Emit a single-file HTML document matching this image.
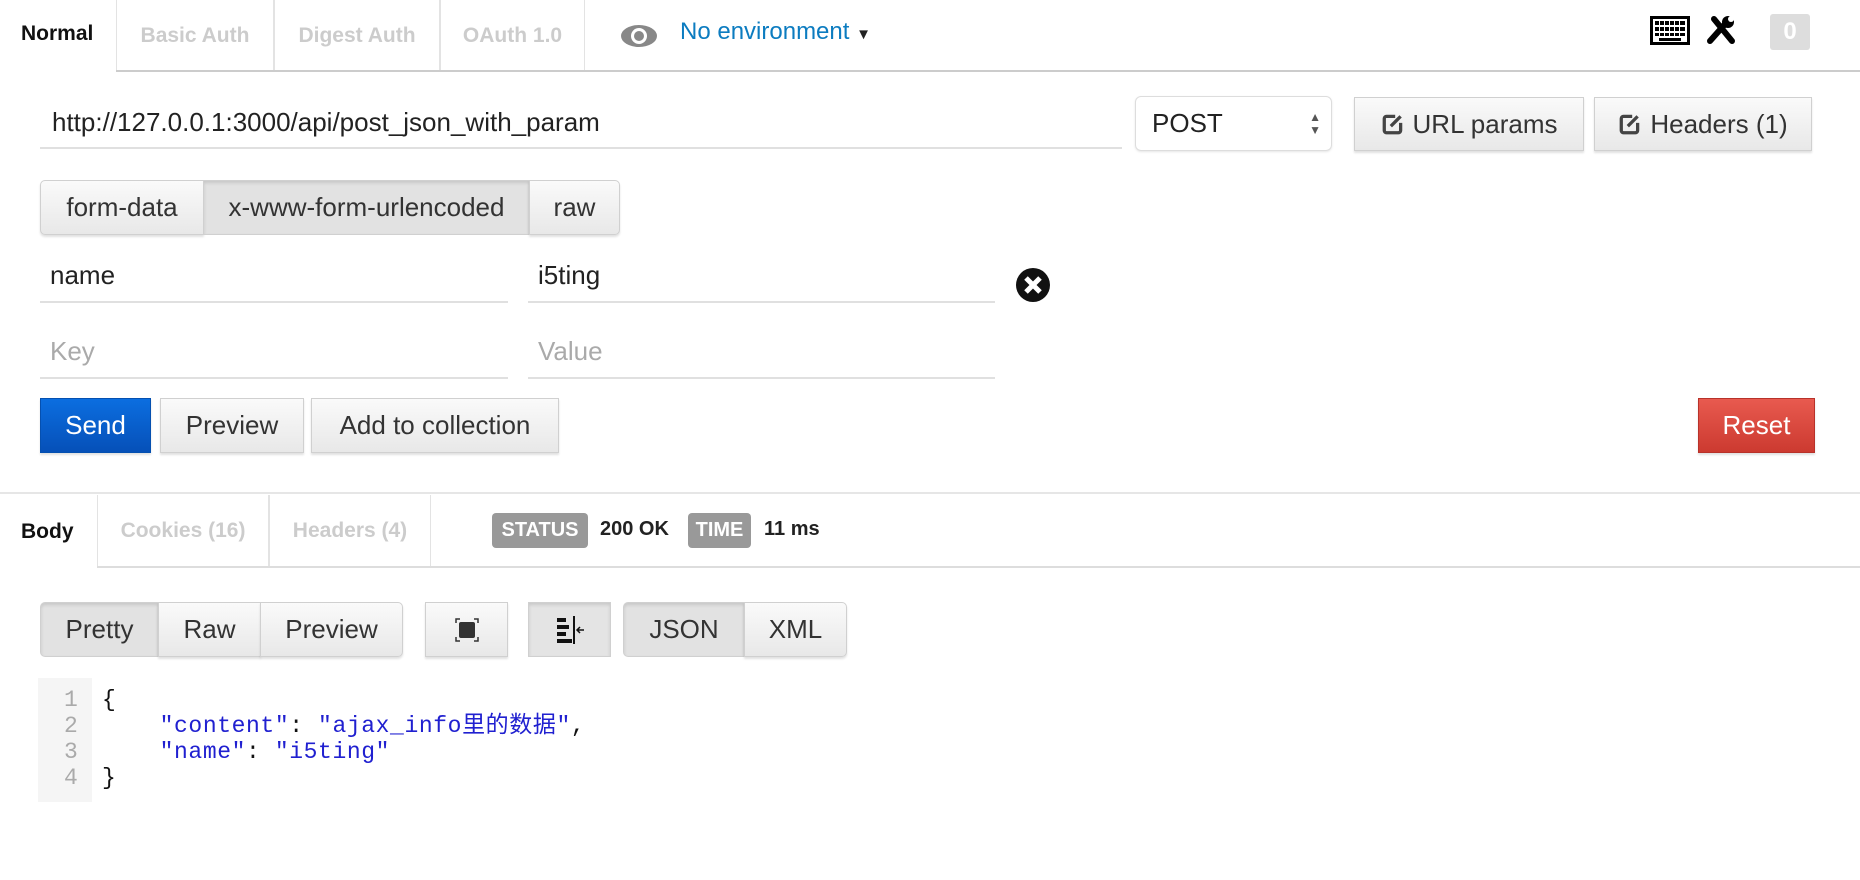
<!DOCTYPE html>
<html><head><meta charset="utf-8"><style>
*{box-sizing:border-box;margin:0;padding:0}
body{width:1860px;height:880px;background:#fff;position:relative;overflow:hidden;font-family:"Liberation Sans","Noto Sans CJK SC",sans-serif;color:#333}
.a{position:absolute}
.tab{position:absolute;top:0;height:71px;border-left:1px solid #e3e3e3;border-right:1px solid #e3e3e3;color:#ccc;font-weight:bold;font-size:21px;display:flex;align-items:center;justify-content:center}
.btn{position:absolute;display:flex;align-items:center;justify-content:center;font-size:26px;color:#333;background:linear-gradient(#fafafa,#e8e8e8);border:1px solid #d0d0d0;box-shadow:0 2px 2px rgba(0,0,0,.12)}
.ln{position:absolute;height:2px;background:#e0e0e0}
.badge{position:absolute;background:#999;color:#fff;font-weight:bold;font-size:20px;border-radius:4px;display:flex;align-items:center;justify-content:center}
.code{font-family:"Liberation Mono","Noto Sans CJK SC",monospace;font-size:23px;line-height:26px;letter-spacing:0.6px}
.t{font-size:26px;color:#222}
</style></head><body>
<div class="a" style="left:21px;top:22px;font-weight:bold;font-size:21px;color:#111">Normal</div>
<div class="tab" style="left:116px;width:158px">Basic Auth</div>
<div class="tab" style="left:274px;width:166px">Digest Auth</div>
<div class="tab" style="left:440px;width:145px">OAuth 1.0</div>
<div class="ln" style="left:116px;top:70px;width:1744px;background:#ccc"></div>
<svg class="a" style="left:620px;top:22px" width="38" height="28" viewBox="0 0 38 28"><ellipse cx="19" cy="14" rx="18" ry="11" fill="#888"/><circle cx="19" cy="14" r="8" fill="#fff"/><circle cx="19" cy="14" r="5" fill="#888"/></svg>
<div class="a" style="left:680px;top:18px;font-size:24px;color:#0c7cc0">No environment <span style="font-size:15px;color:#222">▼</span></div>
<svg class="a" style="left:1650px;top:16px" width="40" height="29" viewBox="0 0 40 29"><rect x="1.5" y="1.5" width="37" height="26" fill="#fff" stroke="#000" stroke-width="3"/><g fill="#000"><rect x="5" y="5" width="30" height="4"/><rect x="5" y="11" width="30" height="4"/><rect x="5" y="17" width="30" height="3"/><rect x="9" y="22" width="22" height="3"/></g><g fill="#fff"><rect x="9" y="5" width="1" height="15"/><rect x="14" y="5" width="1" height="15"/><rect x="19" y="5" width="1" height="15"/><rect x="24" y="5" width="1" height="15"/><rect x="29" y="5" width="1" height="15"/></g></svg>
<svg class="a" style="left:1706px;top:15px" width="30" height="30" viewBox="0 0 30 30"><path d="M4 26 L20 8 M8 4 L26 26" stroke="#000" stroke-width="6" stroke-linecap="round"/><circle cx="22" cy="7" r="6" fill="#000"/><circle cx="25" cy="4" r="3" fill="#fff"/></svg>
<div class="a" style="left:1770px;top:14px;width:40px;height:36px;background:#ddd;border-radius:3px;color:#fff;font-size:24px;font-weight:bold;display:flex;align-items:center;justify-content:center">0</div>
<div class="a t" style="left:52px;top:107px">http://127.0.0.1:3000/api/post_json_with_param</div>
<div class="ln" style="left:40px;top:147px;width:1082px"></div>
<div class="a" style="left:1135px;top:96px;width:197px;height:55px;border:1px solid #ddd;border-radius:6px;box-shadow:0 1px 2px rgba(0,0,0,.1);font-size:26px;padding:11px 16px;color:#222">POST<span style="position:absolute;right:10px;top:14px;font-size:12px;line-height:13px;color:#555">▲<br>▼</span></div>
<div class="btn" style="left:1354px;top:97px;width:230px;height:54px"><svg width="24" height="24" viewBox="0 0 22 22" style="margin-right:8px"><path d="M13 4H5a2 2 0 0 0-2 2v11a2 2 0 0 0 2 2h11a2 2 0 0 0 2-2V10" fill="none" stroke="#444" stroke-width="3"/><path d="M9 13l9-9" stroke="#444" stroke-width="3"/></svg>URL params</div>
<div class="btn" style="left:1594px;top:97px;width:218px;height:54px"><svg width="24" height="24" viewBox="0 0 22 22" style="margin-right:8px"><path d="M13 4H5a2 2 0 0 0-2 2v11a2 2 0 0 0 2 2h11a2 2 0 0 0 2-2V10" fill="none" stroke="#444" stroke-width="3"/><path d="M9 13l9-9" stroke="#444" stroke-width="3"/></svg>Headers (1)</div>
<div class="btn" style="left:40px;top:180px;width:164px;height:55px;border-radius:5px 0 0 5px">form-data</div>
<div class="btn" style="left:203px;top:180px;width:327px;height:55px;background:#e2e2e2;box-shadow:inset 0 2px 3px rgba(0,0,0,.12)">x-www-form-urlencoded</div>
<div class="btn" style="left:529px;top:180px;width:91px;height:55px;border-radius:0 5px 5px 0">raw</div>
<div class="a t" style="left:50px;top:260px">name</div>
<div class="ln" style="left:40px;top:301px;width:468px"></div>
<div class="a t" style="left:538px;top:260px">i5ting</div>
<div class="ln" style="left:528px;top:301px;width:467px"></div>
<svg class="a" style="left:1015px;top:267px" width="36" height="36" viewBox="0 0 36 36"><circle cx="18" cy="18" r="17" fill="#111"/><path d="M11 11L25 25M25 11L11 25" stroke="#fff" stroke-width="5"/></svg>
<div class="a t" style="left:50px;top:336px;color:#aaa">Key</div>
<div class="ln" style="left:40px;top:377px;width:468px"></div>
<div class="a t" style="left:538px;top:336px;color:#aaa">Value</div>
<div class="ln" style="left:528px;top:377px;width:467px"></div>
<div class="btn" style="left:40px;top:398px;width:111px;height:55px;background:linear-gradient(#0b6ee0,#0650b8);color:#fff;border-color:#0550b0">Send</div>
<div class="btn" style="left:160px;top:398px;width:144px;height:55px">Preview</div>
<div class="btn" style="left:311px;top:398px;width:248px;height:55px">Add to collection</div>
<div class="btn" style="left:1698px;top:398px;width:117px;height:55px;background:linear-gradient(#e85a4f,#cc3a30);color:#fff;border-color:#b8322a">Reset</div>
<div class="ln" style="left:0;top:492px;width:1860px;background:#e6e6e6"></div>
<div class="a" style="left:21px;top:520px;font-weight:bold;font-size:21px;color:#111">Body</div>
<div class="tab" style="left:97px;width:172px;top:495px;height:72px">Cookies (16)</div>
<div class="tab" style="left:269px;width:162px;top:495px;height:72px">Headers (4)</div>
<div class="ln" style="left:97px;top:566px;width:1763px;background:#ddd"></div>
<div class="badge" style="left:492px;top:513px;width:96px;height:35px">STATUS</div>
<div class="a" style="left:600px;top:518px;font-weight:bold;font-size:20px;color:#222">200 OK</div>
<div class="badge" style="left:688px;top:513px;width:63px;height:35px">TIME</div>
<div class="a" style="left:764px;top:518px;font-weight:bold;font-size:20px;color:#222">11 ms</div>
<div class="btn" style="left:40px;top:602px;width:119px;height:55px;background:#e2e2e2;box-shadow:inset 0 2px 3px rgba(0,0,0,.12);border-radius:5px 0 0 5px">Pretty</div>
<div class="btn" style="left:158px;top:602px;width:103px;height:55px">Raw</div>
<div class="btn" style="left:260px;top:602px;width:143px;height:55px;border-radius:0 5px 5px 0">Preview</div>
<div class="btn" style="left:425px;top:602px;width:83px;height:55px"><svg width="24" height="24" viewBox="0 0 24 24"><rect x="4" y="4" width="16" height="16" rx="2" fill="#333"/><path d="M1 5V1h4M19 1h4v4M23 19v4h-4M5 23H1v-4" fill="none" stroke="#333" stroke-width="1.5"/></svg></div>
<div class="btn" style="left:528px;top:602px;width:83px;height:55px;background:#e4e4e4;box-shadow:inset 0 2px 3px rgba(0,0,0,.12)"><svg width="30" height="28" viewBox="0 0 30 28"><g fill="#111"><rect x="2" y="2" width="9" height="4"/><rect x="2" y="9" width="12" height="4"/><rect x="2" y="16" width="9" height="4"/><rect x="2" y="23" width="15" height="4"/><rect x="18" y="0" width="2" height="28"/></g><path d="M29 14h-6M25 11l-3 3 3 3" fill="none" stroke="#111" stroke-width="1.5"/></svg></div>
<div class="btn" style="left:623px;top:602px;width:122px;height:55px;background:#e2e2e2;box-shadow:inset 0 2px 3px rgba(0,0,0,.12);border-radius:5px 0 0 5px">JSON</div>
<div class="btn" style="left:744px;top:602px;width:103px;height:55px;border-radius:0 5px 5px 0">XML</div>
<div class="a" style="left:38px;top:678px;width:54px;height:124px;background:#f5f5f5"></div>
<div class="a code" style="left:64px;top:687px;color:#aaa">1<br>2<br>3<br>4</div>
<div class="a code" style="left:102px;top:687px;color:#111;white-space:pre">{
    <span style="color:#2020d0">"content"</span>: <span style="color:#2020d0">"ajax_info里的数据"</span>,
    <span style="color:#2020d0">"name"</span>: <span style="color:#2020d0">"i5ting"</span>
}</div>
</body></html>
